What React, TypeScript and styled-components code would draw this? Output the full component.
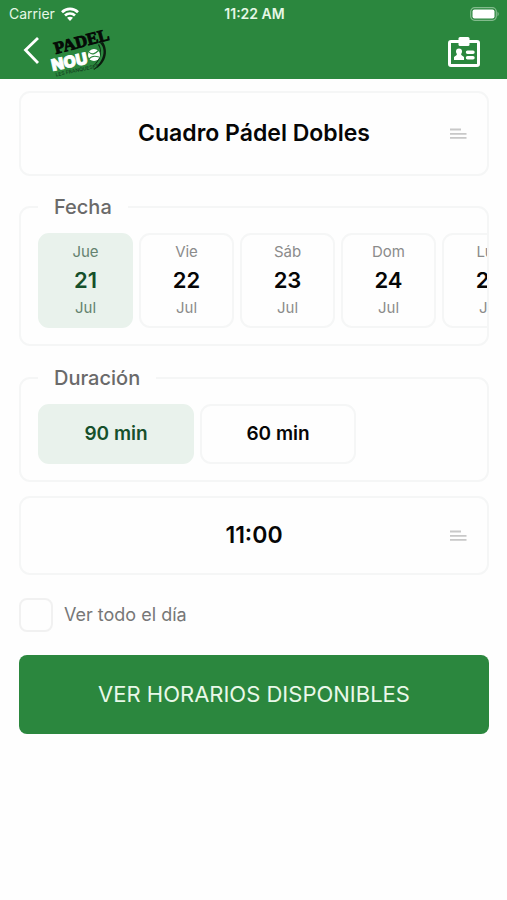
import React, { useState } from "react";
import styled, { createGlobalStyle } from "styled-components";

const green = "#2b873e";
const line = "#f5f6f6";

const GlobalStyle = createGlobalStyle`
  * { box-sizing: border-box; }
  body {
    margin: 0;
    background: #fefefe;
    font-family: Inter, "Open Sans", sans-serif;
    color: #060606;
  }
  button { font-family: inherit; color: inherit; cursor: pointer; }
`;

const Header = styled.header`
  background: ${green};
  color: #fff;
  height: 79px;
`;

const StatusBar = styled.div`
  display: grid;
  grid-template-columns: 1fr auto 1fr;
  align-items: center;
  height: 27px;
  padding: 0 7px 0 9px;
  font-size: 14px;
  line-height: 20px;
  color: #e6f7e6;
`;

const Carrier = styled.span`
  display: flex;
  align-items: center;
  gap: 6px;
`;

const Clock = styled.time`
  font-size: 14px;
  font-weight: 600;
`;

const Battery = styled.svg`
  justify-self: end;
`;

const NavBar = styled.nav`
  display: flex;
  align-items: center;
  height: 52px;
  padding: 0 24px 0 20px;
`;

const IconButton = styled.button<{ $push?: boolean }>`
  display: flex;
  padding: 0 0 4px;
  border: 0;
  background: none;
  margin-left: ${(p) => (p.$push ? "auto" : "0")};
`;

const Logo = styled.svg`
  margin-left: 4px;
  font-family: "Liberation Serif", serif;
`;

const Form = styled.form`
  display: flex;
  flex-direction: column;
  padding: 12px 18px 24px 19px;
`;

const Picker = styled.button<{ $tall?: boolean }>`
  display: grid;
  grid-template-columns: 18px 1fr 18px;
  align-items: center;
  height: ${(p) => (p.$tall ? 85 : 79)}px;
  padding: 0 19px 2px;
  border: 2px solid ${line};
  border-radius: 11px;
  background: #fefefe;
  font-size: 23px;
  line-height: 28px;
  font-weight: 600;
  text-align: center;
`;

const PickerText = styled.span`
  grid-column: 2;
`;

const Group = styled.fieldset<{ $space: number }>`
  min-width: 0;
  margin: ${(p) => p.$space}px 0 0;
  padding: 14px 0 16px 17px;
  border: 2px solid ${line};
  border-radius: 11px;
`;

const Legend = styled.legend`
  height: 24px;
  padding: 0 16px;
  font-size: 20px;
  line-height: 24px;
  font-weight: 500;
  color: #6a6a6a;
`;

const Options = styled.div`
  display: flex;
  gap: 6px;
  overflow-x: auto;
  scrollbar-width: none;
`;

const Chip = styled.button`
  flex: none;
  border: 2px solid ${line};
  border-radius: 11px;
  background: #fefefe;
  padding: 0;

  &[aria-pressed="true"] {
    border-color: #e9f2ec;
    background: #e9f2ec;
    color: #16502b;
  }
`;

const DayChip = styled(Chip)`
  display: flex;
  flex-direction: column;
  align-items: center;
  width: 95px;
  height: 95px;
  padding-top: 6px;
`;

const DayLabel = styled.span<{ $active: boolean }>`
  font-size: 15px;
  line-height: 22px;
  color: ${(p) => (p.$active ? "#64826f" : "#8b8b8b")};
`;

const DayNumber = styled.span`
  font-size: 22px;
  line-height: 34px;
  font-weight: 600;
`;

const DurationChip = styled(Chip)`
  width: 156px;
  height: 60px;
  font-size: 19px;
  line-height: 24px;
  font-weight: 600;
`;

const Spacer = styled.div`
  height: 14px;
`;

const CheckRow = styled.label`
  display: flex;
  align-items: center;
  align-self: flex-start;
  gap: 11px;
  margin: 23px 0;
  font-size: 18px;
  line-height: 24px;
  color: #777;
`;

const CheckBox = styled.input`
  appearance: none;
  width: 34px;
  height: 34px;
  margin: 0;
  border: 2px solid #f1f1f1;
  border-radius: 8px;
  background: #fefefe;

  &:checked {
    background: ${green};
  }
`;

const Submit = styled.button`
  height: 79px;
  border: 0;
  border-radius: 8px;
  padding: 0 0 2px;
  background: ${green};
  font-size: 22px;
  line-height: 28px;

  && {
    color: #e9f8e9;
  }
`;

const MenuLines = () => (
  <svg width="18" height="12" viewBox="0 0 18 12" stroke="#c8c8c8" strokeWidth="1.8" aria-hidden="true">
    <path d="M0 2.5H11M0 6.8H16.5M0 10.8H16.5" />
  </svg>
);

const Wifi = () => (
  <svg width="18" height="14" viewBox="0 0 18 14" fill="none" stroke="#fff" strokeWidth="2.7" aria-hidden="true">
    <path d="M1 5.2C5.5 .8 12.5 .8 17 5.2M4 8.5C6.8 5.8 11.2 5.8 14 8.5" />
    <path d="M6 10.8C7.7 9.3 10.3 9.3 12 10.8L9 14Z" fill="#fff" stroke="none" />
  </svg>
);

const PadelLogo = () => (
  <Logo width="68" height="52" viewBox="0 0 68 52" role="img" aria-label="Padel Nou Les Franqueses">
    <path d="M52 16C58 22 57 33 45 43C58 38 61 24 55 15Z" fill="#0b1b0e" />
    <path d="M50 18C54 24 53 32 44 40C51 36 56 26 51 17Z" fill="#0b2912" />
    <g transform="rotate(-15 8 28)">
      <text x="8" y="27" fontSize="17" fontWeight="700" fill="#050b06" stroke="#050b06" strokeWidth="0.9">
        PADEL
      </text>
    </g>
    <g transform="rotate(-12 5 45)">
      <text x="5" y="44" fontFamily="Inter, sans-serif" fontSize="16" fontWeight="900" fill="#fff" stroke="#fff" strokeWidth="0.8">
        NOU
      </text>
      <text x="7" y="50" fontFamily="Inter, sans-serif" fontSize="5" fontWeight="500" fill="#12401d">
        LES FRANQUESES
      </text>
    </g>
    <circle cx="46" cy="28" r="6" fill="#fff" />
    <path d="M41 25C44 29 48 26 51 23M41 32C44 28 48 29 51 30" fill="none" stroke={green} strokeWidth="1.1" />
  </Logo>
);

const days = [
  { name: "Jue", number: 21 },
  { name: "Vie", number: 22 },
  { name: "Sáb", number: 23 },
  { name: "Dom", number: 24 },
  { name: "Lun", number: 25 },
];

export default function App() {
  const [day, setDay] = useState(21);
  const [minutes, setMinutes] = useState(90);

  return (
    <>
      <GlobalStyle />
      <Header>
        <StatusBar>
          <Carrier>
            Carrier <Wifi />
          </Carrier>
          <Clock>11:22 AM</Clock>
          <Battery width="30" height="14" viewBox="0 0 30 14" aria-label="Batería" role="img">
            <rect x="0.7" y="0.7" width="25.6" height="12.6" rx="4" fill="none" stroke="#83bb8d" strokeWidth="1.2" />
            <rect x="2.5" y="2.5" width="22" height="9" rx="2" fill="#fff" />
            <path d="M27.5 4.5Q30 7 27.5 9.5Z" fill="#83bb8d" />
          </Battery>
        </StatusBar>
        <NavBar>
          <IconButton type="button" aria-label="Volver">
            <svg width="24" height="30" viewBox="0 0 24 30" fill="none" stroke="#fff" strokeWidth="2.8">
              <path d="M18 2L5.5 14L18 27" />
            </svg>
          </IconButton>
          <PadelLogo />
          <IconButton type="button" aria-label="Carné de socio" $push>
            <svg width="38" height="32" viewBox="0 0 38 32">
              <rect x="4.5" y="6.5" width="29" height="24" rx="1.5" fill="none" stroke="#fff" strokeWidth="3" />
              <rect x="13.5" y="2" width="11" height="9" rx="1.5" fill="#fff" />
              <circle cx="14" cy="16.5" r="3" fill="#fff" />
              <path d="M12.2 17H15.8L16.3 20L19 22V25H9V22L11.7 20Z" fill="#fff" />
              <path d="M22.5 17.3H28M22.5 22.8H28" stroke="#fff" strokeWidth="3.4" strokeLinecap="round" />
            </svg>
          </IconButton>
        </NavBar>
      </Header>
      <Form onSubmit={(e) => e.preventDefault()}>
        <Picker type="button" $tall>
          <PickerText>Cuadro Pádel Dobles</PickerText>
          <MenuLines />
        </Picker>
        <Group $space={19}>
          <Legend>Fecha</Legend>
          <Options>
            {days.map((d) => (
              <DayChip key={d.number} type="button" aria-pressed={day === d.number} onClick={() => setDay(d.number)}>
                <DayLabel $active={day === d.number}>{d.name}</DayLabel>
                <DayNumber>{d.number}</DayNumber>
                <DayLabel $active={day === d.number}>Jul</DayLabel>
              </DayChip>
            ))}
          </Options>
        </Group>
        <Group $space={20}>
          <Legend>Duración</Legend>
          <Options>
            {[90, 60].map((m) => (
              <DurationChip key={m} type="button" aria-pressed={minutes === m} onClick={() => setMinutes(m)}>
                {m} min
              </DurationChip>
            ))}
          </Options>
        </Group>
        <Spacer />
        <Picker type="button">
          <PickerText>11:00</PickerText>
          <MenuLines />
        </Picker>
        <CheckRow>
          <CheckBox type="checkbox" />
          Ver todo el día
        </CheckRow>
        <Submit type="submit">VER HORARIOS DISPONIBLES</Submit>
      </Form>
    </>
  );
}
